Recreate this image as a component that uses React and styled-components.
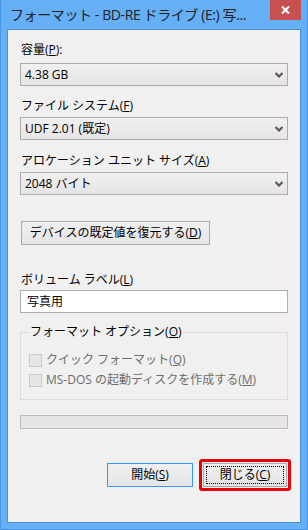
import styled, { createGlobalStyle } from 'styled-components';

const GlobalStyle = createGlobalStyle`
  body {
    margin: 0;
    font-family: "Open Sans", "Noto Sans CJK JP", sans-serif;
  }
`;

const Window = styled.div`
  width: 308px;
  height: 530px;
  box-sizing: border-box;
  background: #64aff5;
  border: 1px solid #4a95dd;
  border-top: none;
  display: flex;
  flex-direction: column;
`;

const TitleBar = styled.div`
  height: 29px;
  display: flex;
  align-items: flex-start;
`;

const Title = styled.div`
  flex: 1;
  padding: 5px 0 0 9px;
  font-size: 14px;
  line-height: 20px;
  letter-spacing: -0.4px;
  color: #222;
  white-space: nowrap;
`;

const CloseButton = styled.div`
  width: 31px;
  height: 20px;
  margin-right: 6px;
  background: #c75050;
  display: flex;
  align-items: center;
  justify-content: center;
`;

const Client = styled.div`
  flex: 1;
  margin: 0 6px 6px;
  border: 1px solid #4a8fd5;
  background: #f0f0f0;
  padding: 12px 12px 0;
  display: flex;
  flex-direction: column;
  font-size: 12px;
  line-height: 16px;
  color: #000;
`;

const Label = styled.div`
  padding-left: 1px;
  margin-top: ${(p) => p.$top || 0}px;
  margin-bottom: ${(p) => p.$bottom || 3}px;
`;

const Key = styled.span`
  text-decoration: underline;
`;

const Select = styled.div`
  height: 23px;
  box-sizing: border-box;
  border: 1px solid #acacac;
  background: linear-gradient(#f0f0f0, #e5e5e5);
  display: flex;
  align-items: center;
  justify-content: space-between;
  padding: 0 4px 0 4px;
`;

const Button = styled.div`
  width: ${(p) => p.$width}px;
  height: 24px;
  box-sizing: border-box;
  border: 1px solid ${(p) => (p.$default ? '#3399ff' : '#acacac')};
  background: linear-gradient(#f0f0f0, #e5e5e5);
  display: flex;
  align-items: center;
  justify-content: center;
  position: relative;
`;

const RestoreButton = styled(Button)`
  margin: 26px 0 0 1px;
`;

const FocusRing = styled.div`
  position: absolute;
  inset: 2px;
  border: 1px dotted #000;
`;

const Input = styled.div`
  height: 23px;
  box-sizing: border-box;
  border: 1px solid #abadb3;
  background: #fff;
  padding: 0 6px;
  display: flex;
  align-items: center;
`;

const Group = styled.fieldset`
  margin: 11px 0 0;
  padding: 10px 8px 9px;
  border: 1px solid #dcdcdc;
  min-width: 0;
`;

const Legend = styled.legend`
  padding: 0 1px;
  line-height: 16px;
`;

const CheckRow = styled.div`
  height: 20px;
  display: flex;
  align-items: center;
  gap: 4px;
  color: #6d6d6d;
`;

const CheckBox = styled.div`
  width: 13px;
  height: 13px;
  box-sizing: border-box;
  border: 1px solid #c9c9c9;
  background: #e6e6e6;
`;

const Progress = styled.div`
  margin-top: 15px;
  height: 14px;
  box-sizing: border-box;
  border: 1px solid #bcbcbc;
  background: #e6e6e6;
`;

const ButtonRow = styled.div`
  margin-top: 30px;
  margin-right: -3px;
  display: flex;
  justify-content: flex-end;
  align-items: center;
  gap: 6px;
`;

const Highlight = styled.div`
  border: 3px solid #e8000b;
  border-radius: 3px;
  padding: 1px;
`;

const Chevron = () => (
  <svg width="8" height="6" viewBox="0 0 8 6">
    <path d="M0.5 1 L4 4.5 L7.5 1" fill="none" stroke="#555" strokeWidth="2" />
  </svg>
);

const Dropdown = ({ children }) => (
  <Select>
    <span>{children}</span>
    <Chevron />
  </Select>
);

export default function App() {
  return (
    <>
      <GlobalStyle />
      <Window>
        <TitleBar>
          <Title>フォーマット - BD-RE ドライブ (E:) 写...</Title>
          <CloseButton>
            <svg width="9" height="8" viewBox="0 0 9 8">
              <path d="M1 0.5 L8 7.5 M8 0.5 L1 7.5" stroke="#fff" strokeWidth="2" />
            </svg>
          </CloseButton>
        </TitleBar>
        <Client>
          <Label $bottom={5}>
            容量(<Key>P</Key>):
          </Label>
          <Dropdown>4.38 GB</Dropdown>
          <Label $top={12}>
            ファイル システム(<Key>F</Key>)
          </Label>
          <Dropdown>UDF 2.01 (既定)</Dropdown>
          <Label $top={13}>
            アロケーション ユニット サイズ(<Key>A</Key>)
          </Label>
          <Dropdown>2048 バイト</Dropdown>
          <RestoreButton $width={189}>
            デバイスの既定値を復元する(<Key>D</Key>)
          </RestoreButton>
          <Label $top={27} $bottom={2}>
            ボリューム ラベル(<Key>L</Key>)
          </Label>
          <Input>写真用</Input>
          <Group>
            <Legend>
              フォーマット オプション(<Key>O</Key>)
            </Legend>
            <CheckRow>
              <CheckBox />
              <span>
                クイック フォーマット(<Key>Q</Key>)
              </span>
            </CheckRow>
            <CheckRow>
              <CheckBox />
              <span>
                MS-DOS の起動ディスクを作成する(<Key>M</Key>)
              </span>
            </CheckRow>
          </Group>
          <Progress />
          <ButtonRow>
            <Button $width={86} $default>
              開始(<Key>S</Key>)
            </Button>
            <Highlight>
              <Button $width={84}>
                <FocusRing />
                閉じる(<Key>C</Key>)
              </Button>
            </Highlight>
          </ButtonRow>
        </Client>
      </Window>
    </>
  );
}
